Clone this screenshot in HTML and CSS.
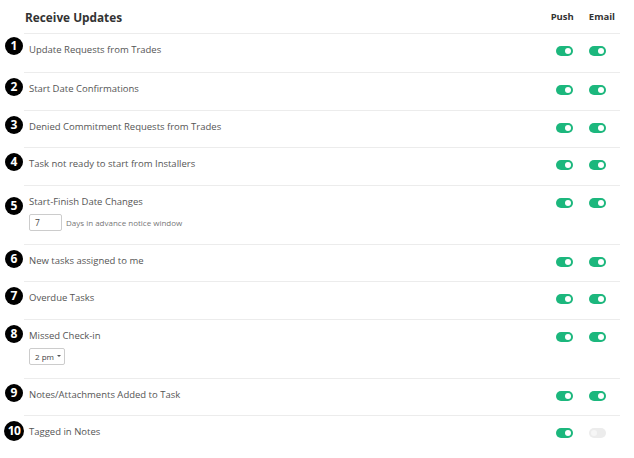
FILE: index.html
```html
<!DOCTYPE html>
<html lang="en">
<head>
<meta charset="utf-8">
<title>Receive Updates</title>
<link rel="stylesheet" href="styles.css">
</head>
<body>
<div class="panel">
  <div class="header">
    <div class="title">Receive Updates</div>
    <div class="cols">
      <span class="col-head push-head">Push</span>
      <span class="col-head email-head">Email</span>
    </div>
  </div>

  <div class="row">
    <div class="badge badge--first">1</div>
    <div class="body body--first">
      <div class="main"><div class="label">Update Requests from Trades</div></div>
      <div class="toggles"><span class="toggle on"></span><span class="toggle on"></span></div>
    </div>
  </div>

  <div class="row">
    <div class="badge">2</div>
    <div class="body">
      <div class="main"><div class="label">Start Date Confirmations</div></div>
      <div class="toggles"><span class="toggle on"></span><span class="toggle on"></span></div>
    </div>
  </div>

  <div class="row">
    <div class="badge">3</div>
    <div class="body">
      <div class="main"><div class="label">Denied Commitment Requests from Trades</div></div>
      <div class="toggles"><span class="toggle on"></span><span class="toggle on"></span></div>
    </div>
  </div>

  <div class="row">
    <div class="badge">4</div>
    <div class="body">
      <div class="main"><div class="label">Task not ready to start from Installers</div></div>
      <div class="toggles"><span class="toggle on"></span><span class="toggle on"></span></div>
    </div>
  </div>

  <div class="row">
    <div class="badge badge--mid">5</div>
    <div class="body body--sub">
      <div class="main">
        <div class="label">Start-Finish Date Changes</div>
        <div class="sub">
          <span class="num-input">7</span>
          <span class="hint">Days in advance notice window</span>
        </div>
      </div>
      <div class="toggles"><span class="toggle on"></span><span class="toggle on"></span></div>
    </div>
  </div>

  <div class="row">
    <div class="badge">6</div>
    <div class="body">
      <div class="main"><div class="label">New tasks assigned to me</div></div>
      <div class="toggles"><span class="toggle on"></span><span class="toggle on"></span></div>
    </div>
  </div>

  <div class="row">
    <div class="badge">7</div>
    <div class="body">
      <div class="main"><div class="label">Overdue Tasks</div></div>
      <div class="toggles"><span class="toggle on"></span><span class="toggle on"></span></div>
    </div>
  </div>

  <div class="row">
    <div class="badge">8</div>
    <div class="body body--sub">
      <div class="main">
        <div class="label">Missed Check-in</div>
        <div class="sub">
          <span class="select">2 pm <span class="caret"></span></span>
        </div>
      </div>
      <div class="toggles"><span class="toggle on"></span><span class="toggle on"></span></div>
    </div>
  </div>

  <div class="row">
    <div class="badge">9</div>
    <div class="body">
      <div class="main"><div class="label">Notes/Attachments Added to Task</div></div>
      <div class="toggles"><span class="toggle on"></span><span class="toggle on"></span></div>
    </div>
  </div>

  <div class="row">
    <div class="badge badge--wide">10</div>
    <div class="body">
      <div class="main"><div class="label">Tagged in Notes</div></div>
      <div class="toggles"><span class="toggle on"></span><span class="toggle off"></span></div>
    </div>
  </div>
</div>
</body>
</html>
```
FILE: styles.css
```css
html, body {
  margin: 0;
  padding: 0;
  background: #fff;
}

body {
  font-family: "Open Sans", "Liberation Sans", sans-serif;
  color: #555;
}

.panel {
  width: 620px;
  padding-bottom: 6px;
}

.header {
  display: flex;
  align-items: center;
  justify-content: space-between;
  height: 33px;
  margin-left: 24px;
  padding-left: 1px;
  padding-right: 5px;
  box-sizing: border-box;
}

.title {
  font-size: 11.8px;
  font-weight: 700;
  color: #333;
}

.cols {
  display: flex;
  gap: 15px;
}

.col-head {
  font-size: 9.5px;
  font-weight: 700;
  color: #333;
}

.push-head { margin-left: 2px; }

.row {
  display: flex;
  align-items: flex-start;
}

.badge {
  width: 18px;
  height: 18px;
  margin: 6px 1px 0 5px;
  border-radius: 50%;
  background: #000;
  color: #fff;
  font-size: 12px;
  font-weight: 700;
  line-height: 18px;
  text-align: center;
  flex: none;
}

.badge--first { margin-top: 4px; }
.badge--mid { margin-top: 12px; }
.badge--wide {
  width: 20px;
  height: 20px;
  line-height: 20px;
  margin-left: 4px;
  margin-right: 0;
  letter-spacing: -0.5px;
}

.body {
  flex: 1;
  display: flex;
  justify-content: space-between;
  align-items: flex-start;
  border-top: 1px solid #ececec;
  padding: 8px 14px 12.5px 5px;
}

.body--first { padding-bottom: 14px; }
.body--sub { padding-bottom: 13px; }

.main {
  display: flex;
  flex-direction: column;
}

.label {
  font-size: 9.5px;
  line-height: 16px;
  color: #555;
}

.sub {
  display: flex;
  align-items: center;
  margin-top: 4px;
  gap: 4px;
}

.num-input {
  box-sizing: border-box;
  width: 33px;
  height: 17px;
  border: 1px solid #ccc;
  border-radius: 2px;
  font-size: 8.5px;
  line-height: 15px;
  padding-left: 5px;
  color: #444;
}

.hint {
  font-size: 8px;
  color: #777;
}

.select {
  box-sizing: border-box;
  display: inline-flex;
  align-items: center;
  gap: 3px;
  height: 17px;
  width: 36px;
  padding-left: 5px;
  border: 1px solid #ccc;
  border-radius: 2px;
  font-size: 8px;
  color: #444;
}

.caret {
  width: 0;
  height: 0;
  border-left: 2.5px solid transparent;
  border-right: 2.5px solid transparent;
  border-top: 2.5px solid #555;
}

.toggles {
  display: flex;
  gap: 16px;
  padding-top: 4px;
}

.toggle {
  position: relative;
  display: block;
  width: 17px;
  height: 10px;
  border-radius: 5px;
  background: #1cb77d;
}

.toggle::after {
  content: "";
  position: absolute;
  top: 2px;
  width: 6px;
  height: 6px;
  border-radius: 50%;
  background: #fff;
}

.toggle.on::after { right: 2px; }

.toggle.off { background: #ececec; }
.toggle.off::after { left: 2px; background: #f6f6f6; }
```
